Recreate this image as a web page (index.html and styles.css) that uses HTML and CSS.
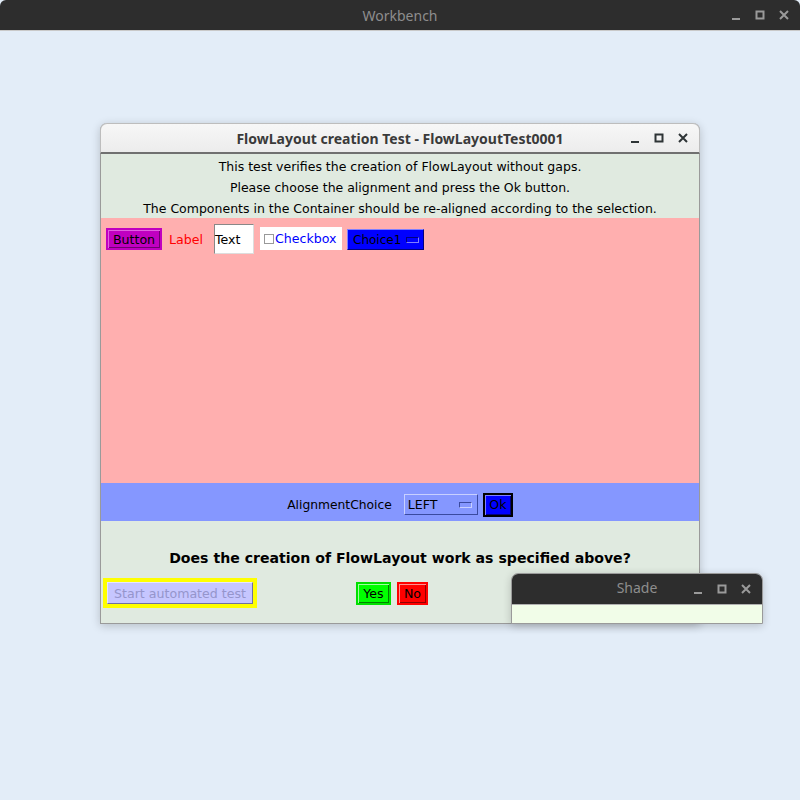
FILE: index.html
```html
<!DOCTYPE html>
<html>
<head>
<meta charset="utf-8">
<link rel="stylesheet" href="styles.css">
</head>
<body>
<div class="desktop">
  <div class="wb-bar">
    <span class="wb-title">Workbench</span>
    <div class="ctrls dark">
      <svg width="12" height="12" viewBox="0 0 12 12"><rect x="2" y="9" width="8" height="2" fill="currentColor"/></svg>
      <svg width="12" height="12" viewBox="0 0 12 12"><rect x="2.5" y="2.5" width="7" height="7" fill="none" stroke="currentColor" stroke-width="2"/></svg>
      <svg width="12" height="12" viewBox="0 0 12 12"><path d="M2 2L10 10M10 2L2 10" stroke="currentColor" stroke-width="2"/></svg>
    </div>
  </div>

  <div class="window main">
    <div class="titlebar">
      <span class="title">FlowLayout creation Test - FlowLayoutTest0001</span>
      <div class="ctrls light">
        <svg width="12" height="12" viewBox="0 0 12 12"><rect x="2" y="9" width="8" height="2" fill="currentColor"/></svg>
        <svg width="12" height="12" viewBox="0 0 12 12"><rect x="2.5" y="2.5" width="7" height="7" fill="none" stroke="currentColor" stroke-width="2"/></svg>
        <svg width="12" height="12" viewBox="0 0 12 12"><path d="M2 2L10 10M10 2L2 10" stroke="currentColor" stroke-width="2"/></svg>
      </div>
    </div>
    <div class="content">
      <div class="info">
        <p>This test verifies the creation of FlowLayout without gaps.</p>
        <p>Please choose the alignment and press the Ok button.</p>
        <p>The Components in the Container should be re-aligned according to the selection.</p>
      </div>
      <div class="canvas">
        <span class="awt-btn magenta">Button</span>
        <span class="awt-label">Label</span>
        <span class="awt-text">Text</span>
        <span class="awt-check"><span class="box"></span>Checkbox</span>
        <span class="awt-choice blue">Choice1<span class="knob"></span></span>
      </div>
      <div class="controls">
        <span class="ctl-label">AlignmentChoice</span>
        <span class="awt-choice periw">LEFT<span class="knob"></span></span>
        <span class="awt-btn okbtn">Ok</span>
      </div>
      <div class="question">Does the creation of FlowLayout work as specified above?</div>
      <div class="bottom">
        <div class="yellow"><span class="awt-btn disabled">Start automated test</span></div>
        <div class="yn">
          <span class="awt-btn green">Yes</span>
          <span class="awt-btn red">No</span>
        </div>
      </div>
    </div>
  </div>

  <div class="window shade">
    <div class="shade-bar">
      <span class="shade-title">Shade</span>
      <div class="ctrls dark">
        <svg width="12" height="12" viewBox="0 0 12 12"><rect x="2" y="9" width="8" height="2" fill="currentColor"/></svg>
        <svg width="12" height="12" viewBox="0 0 12 12"><rect x="2.5" y="2.5" width="7" height="7" fill="none" stroke="currentColor" stroke-width="2"/></svg>
        <svg width="12" height="12" viewBox="0 0 12 12"><path d="M2 2L10 10M10 2L2 10" stroke="currentColor" stroke-width="2"/></svg>
      </div>
    </div>
    <div class="shade-body"></div>
  </div>
</div>
</body>
</html>
```

FILE: styles.css
```css
html, body {
  margin: 0;
  padding: 0;
}
body {
  width: 800px;
  height: 800px;
  background: #e3edf8;
  font-family: "DejaVu Sans", sans-serif;
  overflow: hidden;
}
.desktop {
  position: relative;
  width: 800px;
  height: 800px;
}
.wb-bar {
  height: 31px;
  background: #2d2d2d;
  border-radius: 6px 6px 0 0;
  display: flex;
  align-items: center;
  justify-content: center;
  position: relative;
  border-bottom: 1px solid #c9c9c9;
  box-sizing: border-box;
}
.wb-title {
  color: #8e8e8e;
  font-family: "Noto Sans", "DejaVu Sans", sans-serif;
  font-size: 14px;
}
.ctrls {
  position: absolute;
  right: 10px;
  top: 0;
  bottom: 0;
  display: flex;
  align-items: center;
  gap: 12px;
}
.ctrls.dark { color: #9a9a9a; }
.ctrls.light { color: #2e3436; }

.window {
  position: absolute;
  box-sizing: border-box;
}
.main {
  left: 100px;
  top: 123px;
  width: 600px;
  height: 501px;
  border: 1px solid #9a9a9a;
  border-top: none;
  border-radius: 7px 7px 0 0;
  box-shadow: 0 2px 10px rgba(0,0,0,0.2);
  display: flex;
  flex-direction: column;
}
.titlebar {
  height: 31px;
  flex: none;
  background: linear-gradient(#f7f7f7, #ececec);
  border: 1px solid #bdbdbd;
  border-bottom: 2px solid #707070;
  border-radius: 7px 7px 0 0;
  margin: 0 -1px;
  box-sizing: border-box;
  display: flex;
  align-items: center;
  justify-content: center;
  position: relative;
}
.title {
  font-family: "Noto Sans", "DejaVu Sans", sans-serif;
  font-size: 14px;
  font-weight: bold;
  color: #3a3a3a;
}
.content {
  flex: 1;
  background: #e0eae0;
  display: flex;
  flex-direction: column;
}
.info {
  height: 64px;
  flex: none;
  box-sizing: border-box;
  padding-top: 2px;
  overflow: hidden;
}
.info p {
  margin: 0;
  text-align: center;
  font-size: 12.5px;
  line-height: 21px;
  color: #000;
}
.canvas {
  height: 265px;
  flex: none;
  background: #ffafaf;
  display: flex;
  align-items: flex-start;
  padding: 6px 0 0 5px;
  box-sizing: border-box;
}
.awt-btn {
  display: inline-flex;
  align-items: center;
  justify-content: center;
  box-sizing: border-box;
  font-size: 12.6px;
  color: #000;
  border: 1px solid;
  border-color: #ffffff80 #00000080 #00000080 #ffffff80;
}
.magenta {
  width: 56px;
  height: 22px;
  margin-top: 4px;
  background: #c000c0;
  border: 2px solid #c000c0;
  box-shadow: inset 1px 1px 0 #e060e0, inset -1px -1px 0 #700070;
}
.awt-label {
  color: #ff0000;
  font-size: 12.6px;
  margin: 8px 0 0 7px;
  width: 45px;
}
.awt-text {
  width: 40px;
  height: 30px;
  box-sizing: border-box;
  background: #fff;
  border: 1px solid;
  border-color: #888 #ddd #ddd #888;
  font-size: 12.6px;
  display: flex;
  align-items: center;
  padding-top: 1px;
}
.awt-check {
  margin: 3px 0 0 6px;
  width: 82px;
  height: 23px;
  background: #fff;
  color: #0000ff;
  font-size: 12.6px;
  display: flex;
  align-items: center;
  box-sizing: border-box;
  padding-left: 4px;
}
.awt-check .box {
  width: 8px;
  height: 8px;
  border: 1px solid #999;
  margin-right: 1px;
}
.awt-choice {
  display: inline-flex;
  align-items: center;
  box-sizing: border-box;
  font-size: 12.6px;
  position: relative;
}
.awt-choice .knob {
  position: absolute;
  right: 4px;
  top: 50%;
  width: 11px;
  height: 4px;
  margin-top: -3px;
  border: 1px solid;
}
.blue {
  margin: 5px 0 0 5px;
  width: 77px;
  height: 21px;
  background: #0000ff;
  border: 1px solid;
  border-color: #8080ff #000080 #000080 #8080ff;
  padding-left: 5px;
  color: #000;
  font-size: 12px;
}
.blue .knob {
  border-color: #000080 #8080ff #8080ff #000080;
}
.controls {
  height: 38px;
  flex: none;
  background: #8597ff;
  display: flex;
  align-items: center;
  justify-content: center;
  box-sizing: border-box;
  padding-top: 5px;
}
.ctl-label {
  font-size: 12.3px;
  color: #000;
  margin-right: 12px;
}
.periw {
  width: 74px;
  height: 21px;
  background: #8597ff;
  border: 1px solid;
  border-color: #c8d0ff #3a4aa0 #3a4aa0 #c8d0ff;
  padding-left: 3px;
}
.periw .knob {
  border-color: #3a4aa0 #c8d0ff #c8d0ff #3a4aa0;
  right: 5px;
}
.okbtn {
  width: 30px;
  height: 24px;
  margin-left: 5px;
  background: #0000ff;
  border: 2px solid #000;
  box-shadow: inset 1px 1px 0 #8080ff, inset -1px -1px 0 #000080;
}
.question {
  text-align: center;
  font-size: 14.1px;
  font-weight: bold;
  color: #000;
  margin-top: 28px;
  line-height: 18px;
}
.bottom {
  display: flex;
  align-items: center;
  margin-top: 11px;
  padding-left: 2px;
}
.yellow {
  background: #ffff00;
  width: 154px;
  height: 30px;
  box-sizing: border-box;
  padding: 4px;
  display: flex;
}
.disabled {
  flex: 1;
  background: #c6c6ff;
  color: #9595cc;
  border-color: #e6e6ff #7070a0 #7070a0 #e6e6ff;
}
.yn {
  display: flex;
  gap: 6px;
  margin-left: 99px;
}
.green {
  width: 35px;
  height: 23px;
  background: #00ff00;
  border: 2px solid #00e000;
  box-shadow: inset 1px 1px 0 #a0ffa0, inset -1px -1px 0 #008000;
}
.red {
  width: 31px;
  height: 23px;
  background: #ff0000;
  border: 2px solid #ff0000;
  box-shadow: inset 1px 1px 0 #ff9090, inset -1px -1px 0 #900000;
}
.shade {
  left: 511px;
  top: 573px;
  width: 252px;
  height: 51px;
  border: 1px solid #9a9a9a;
  border-radius: 7px 7px 0 0;
  overflow: hidden;
  box-shadow: 0 2px 8px rgba(0,0,0,0.2);
}
.shade-bar {
  height: 30px;
  background: #2d2d2d;
  display: flex;
  align-items: center;
  justify-content: center;
  position: relative;
  border-bottom: 1px solid #b0b0b0;
}
.shade-title {
  color: #8e8e8e;
  font-family: "Noto Sans", "DejaVu Sans", sans-serif;
  font-size: 14px;
  margin-top: -3px;
}
.shade-body {
  height: 20px;
  background: #f1fde8;
}
```
